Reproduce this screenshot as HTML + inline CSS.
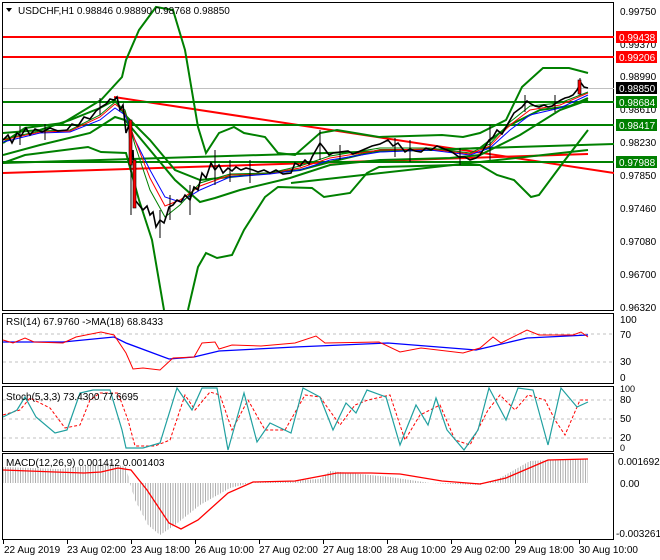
<!DOCTYPE html>
<html><head><meta charset="utf-8"><style>
body{margin:0;background:#fff;width:660px;height:560px;overflow:hidden}
svg{display:block;font-family:"Liberation Sans",sans-serif;font-size:10px}
</style></head><body>
<svg width="660" height="560" viewBox="0 0 660 560">
<defs>
<pattern id="hs" width="2.5" height="10" patternUnits="userSpaceOnUse"><rect x="0" y="0" width="1" height="10" fill="#b0b0b0"/></pattern>
<clipPath id="cm"><rect x="3" y="3" width="611" height="307"/></clipPath>
</defs>
<rect width="660" height="560" fill="#fff"/>
<rect x="2.5" y="2.5" width="611" height="308" fill="none" stroke="#000"/>
<rect x="2.5" y="313.5" width="611" height="70" fill="none" stroke="#000"/>
<rect x="2.5" y="386.5" width="611" height="65" fill="none" stroke="#000"/>
<rect x="2.5" y="453.5" width="611" height="86" fill="none" stroke="#000"/>

<g clip-path="url(#cm)">
<line x1="3" y1="88.5" x2="614" y2="88.5" stroke="#c0c0c0"/>
<g stroke="#ff0000" stroke-width="2">
<line x1="3" y1="37" x2="614" y2="37"/>
<line x1="3" y1="57" x2="614" y2="57"/>
<line x1="114" y1="97" x2="614" y2="173"/>
<line x1="3" y1="173" x2="588" y2="154"/>
</g>
<g stroke="#008000" stroke-width="2" fill="none">
<line x1="3" y1="102" x2="614" y2="102"/>
<line x1="3" y1="125" x2="614" y2="125"/>
<line x1="3" y1="162" x2="614" y2="162"/>
<line x1="3" y1="163" x2="614" y2="144"/>
<line x1="291" y1="183" x2="588" y2="150"/>
<polyline points="3,143 25,128 63,123 101,100 122,77 126,60 139,30 156,7 173,10 185,50 198,127 206,153 219,133 234,127 244,133 265,137 278,153 295,155 320,133 337,130 379,137 442,135 463,137 480,133 506,120 522,87 543,68 569,68 588,73"/>
<polyline points="3,163 25,155 88,147 101,152 126,153 139,200 152,240 164,310"/>
<polyline points="188,310 198,267 206,253 217,258 232,255 244,230 265,197 278,187 312,188 324,197 350,193 367,173 379,167 455,165 480,165 497,175 514,180 531,197 539,195 565,160 588,130"/>
<polyline points="3,155 40,145 90,133 115,117 125,120 150,150 175,180 200,202 215,198 240,190 290,178 330,165 380,160 450,158 480,155 520,135 560,110 588,100"/>
<polyline points="3,133 40,130 70,120 100,108 115,100 125,115 150,140 175,170 200,180 250,175 300,170 330,162 380,150 440,150 480,148 510,125 540,110 570,106 588,98"/>
</g>
<polyline fill="none" stroke="#0000ff" points="3,142 40,133 70,132 100,120 115,108 125,115 135,140 150,170 165,197 180,202 200,190 230,177 270,174 300,170 330,160 380,152 430,150 470,155 490,148 510,130 530,115 560,108 588,95"/>
<polyline fill="none" stroke="#ff0000" points="3,140 40,132 70,131 100,117 115,104 125,112 135,140 150,178 165,206 180,200 200,186 230,175 270,173 300,168 330,158 380,150 430,149 470,154 490,146 510,125 530,110 560,105 588,93"/>
<polyline fill="none" stroke="#008000" points="3,139 40,131 70,130 100,115 115,102 125,110 135,145 150,190 165,217 180,205 200,183 230,174 270,173 300,166 330,156 380,148 430,148 470,153 490,144 510,122 530,106 560,103 588,92"/>
<polyline fill="none" stroke="#000" stroke-width="1.6" points="3,140 8,135 12,143 17,133 21,136 26,128 30,135 35,129 42,132 50,128 58,131 67,130 72,124 78,126 84,117 90,119 96,111 101,107 106,104 110,99 114,100 117,97 120,110 123,105 126,133 129,125 131,160 133,150 135,200 139,205 143,210 147,206 150,215 153,212 156,227 160,220 164,223 167,214 169,207 173,205 177,200 181,202 185,195 190,200 194,187 198,190 202,173 206,178 211,163 215,170 219,165 223,173 228,168 232,171 236,167 241,170 246,168 253,170 258,172 264,170 270,173 276,170 283,174 291,173 295,163 300,166 305,160 309,164 312,157 316,150 320,143 324,148 329,155 333,153 340,152 348,151 353,154 358,152 365,149 372,146 380,144 388,140 393,146 398,143 405,152 410,149 415,151 421,152 426,148 431,150 437,146 442,148 447,150 452,152 459,157 465,157 470,160 476,158 480,155 485,147 489,140 493,137 497,130 502,134 506,127 510,120 514,113 518,110 522,107 527,101 531,104 535,106 539,107 544,105 548,107 552,106 556,103 561,100 565,98 569,97 573,95 577,90 581,83 584,87 588,88"/>
<g stroke="#000" stroke-width="1">
<line x1="131" y1="150" x2="131" y2="215"/><line x1="160" y1="210" x2="160" y2="238"/><line x1="190" y1="185" x2="190" y2="215"/><line x1="215" y1="150" x2="215" y2="185"/><line x1="320" y1="130" x2="320" y2="160"/><line x1="410" y1="140" x2="410" y2="162"/><line x1="490" y1="125" x2="490" y2="160"/><line x1="580" y1="78" x2="580" y2="95"/><line x1="250" y1="160" x2="250" y2="183"/>
<line x1="20" y1="126" x2="20" y2="145"/><line x1="45" y1="124" x2="45" y2="140"/><line x1="100" y1="98" x2="100" y2="115"/><line x1="170" y1="195" x2="170" y2="220"/><line x1="230" y1="160" x2="230" y2="182"/><line x1="340" y1="145" x2="340" y2="160"/><line x1="395" y1="138" x2="395" y2="157"/><line x1="460" y1="148" x2="460" y2="165"/><line x1="525" y1="95" x2="525" y2="112"/><line x1="555" y1="95" x2="555" y2="112"/>
</g>
<rect x="129" y="120" width="3" height="45" fill="#ff0000" stroke="#000" stroke-width="0.6"/>
<rect x="133" y="160" width="3" height="48" fill="#ff0000" stroke="#000" stroke-width="0.6"/>
<rect x="578" y="80" width="3" height="14" fill="#ff0000" stroke="#000" stroke-width="0.6"/>
</g>
<path d="M6,8 L12,8 L9,12 Z" fill="#000"/>
<text x="18" y="14" font-size="10">USDCHF,H1  0.98846 0.98890 0.98768 0.98850</text>

<g font-size="10" fill="#000">
<text x="620" y="15">0.99750</text><text x="620" y="48">0.99370</text><text x="620" y="80">0.98990</text><text x="620" y="113">0.98610</text><text x="620" y="146">0.98230</text><text x="620" y="179">0.97850</text><text x="620" y="212">0.97460</text><text x="620" y="245">0.97080</text><text x="620" y="278">0.96700</text><text x="620" y="311">0.96320</text>
</g>
<rect x="616" y="31" width="41" height="12" fill="#ff0000"/><text x="619" y="41" fill="#fff">0.99438</text>
<rect x="616" y="51" width="41" height="12" fill="#ff0000"/><text x="619" y="61" fill="#fff">0.99206</text>
<rect x="616" y="82" width="41" height="12" fill="#000"/><text x="619" y="92" fill="#fff">0.98850</text>
<rect x="616" y="96" width="41" height="12" fill="#008000"/><text x="619" y="106" fill="#fff">0.98684</text>
<rect x="616" y="119" width="41" height="12" fill="#008000"/><text x="619" y="129" fill="#fff">0.98417</text>
<rect x="616" y="156" width="41" height="12" fill="#008000"/><text x="619" y="166" fill="#fff">0.97988</text>

<g stroke="#c0c0c0" stroke-dasharray="3,3"><line x1="3" y1="334" x2="613" y2="334"/><line x1="3" y1="362" x2="613" y2="362"/></g>
<polyline fill="none" stroke="#0000ff" stroke-width="1.3" points="3,342 63,342 114,337 126,343 169,359 194,357 219,351 295,347 388,343 476,350 493,346 527,338 588,335"/>
<polyline fill="none" stroke="#ff0000" points="3,340 13,343 25,338 34,342 63,343 76,337 101,332 114,335 126,353 133,369 143,368 160,370 173,358 194,357 202,343 215,342 219,349 232,345 261,346 295,343 316,336 325,343 379,342 400,352 421,348 463,353 480,348 493,337 501,343 527,330 539,335 573,335 581,332 588,337"/>
<text x="6" y="325">RSI(14) 67.9760  -&gt;MA(18) 68.8433</text>
<text x="620" y="323">100</text><text x="620" y="338">70</text><text x="620" y="365">30</text><text x="620" y="381">0</text>

<g stroke="#c0c0c0" stroke-dasharray="3,3"><line x1="3" y1="400" x2="613" y2="400"/><line x1="3" y1="419" x2="613" y2="419"/><line x1="3" y1="438" x2="613" y2="438"/></g>
<polyline fill="none" stroke="#ff0000" stroke-dasharray="3,2" points="3,415 20,410 30,398 50,408 65,428 80,425 90,400 100,393 118,393 128,420 135,446 155,446 170,440 185,395 195,410 210,392 220,395 232,430 248,400 265,430 285,430 305,395 320,397 340,425 355,405 368,400 390,395 405,440 420,415 440,405 455,440 470,445 488,410 500,395 515,410 528,395 545,400 555,420 565,435 580,400 588,400"/>
<polyline fill="none" stroke="#20a0a0" stroke-width="1.2" points="3,417 17,410 25,397 36,417 55,433 67,430 80,393 93,390 110,390 122,430 126,448 143,448 160,443 177,388 192,410 202,388 217,388 228,450 244,393 257,442 270,423 291,433 303,388 320,397 333,430 346,403 356,413 367,390 386,397 400,445 416,405 428,425 436,398 447,430 464,450 478,430 489,388 506,420 518,388 533,390 548,445 561,388 577,407 588,402"/>
<text x="6" y="400">Stoch(5,3,3) 73.4300 77.6695</text>
<text x="620" y="392" font-size="9">100</text><text x="620" y="403">80</text><text x="620" y="422">50</text><text x="620" y="441">20</text><text x="620" y="451" font-size="9">0</text>

<polygon fill="url(#hs)" points="3,467 60,469 110,463 126,467 130,483 135,500 148,525 160,535 175,525 200,505 230,488 250,483 320,479 330,471 390,477 430,483 480,485 500,478 530,461 570,459 588,459 588,483 3,483"/>
<polyline fill="none" stroke="#ff0000" stroke-width="1.3" points="3,470 55,472 84,473 101,472 118,468 131,470 147,490 169,523 181,529 198,520 228,493 253,482 295,481 337,473 371,473 400,474 442,481 480,484 506,478 548,460 588,459"/>
<text x="6" y="466">MACD(12,26,9) 0.001412 0.001403</text>
<text x="618" y="465">0.001692</text><text x="620" y="487">0.00</text><text x="616" y="537">-0.003261</text>

<g stroke="#000"><line x1="3.5" y1="540" x2="3.5" y2="544"/><line x1="67.5" y1="540" x2="67.5" y2="544"/><line x1="131.5" y1="540" x2="131.5" y2="544"/><line x1="195.5" y1="540" x2="195.5" y2="544"/><line x1="259.5" y1="540" x2="259.5" y2="544"/><line x1="323.5" y1="540" x2="323.5" y2="544"/><line x1="387.5" y1="540" x2="387.5" y2="544"/><line x1="451.5" y1="540" x2="451.5" y2="544"/><line x1="515.5" y1="540" x2="515.5" y2="544"/><line x1="579.5" y1="540" x2="579.5" y2="544"/></g>
<g font-size="10"><text x="4" y="553">22 Aug 2019</text><text x="67" y="553">23 Aug 02:00</text><text x="131" y="553">23 Aug 18:00</text><text x="195" y="553">26 Aug 10:00</text><text x="259" y="553">27 Aug 02:00</text><text x="323" y="553">27 Aug 18:00</text><text x="387" y="553">28 Aug 10:00</text><text x="451" y="553">29 Aug 02:00</text><text x="515" y="553">29 Aug 18:00</text><text x="579" y="553">30 Aug 10:00</text></g>
</svg>
</body></html>
